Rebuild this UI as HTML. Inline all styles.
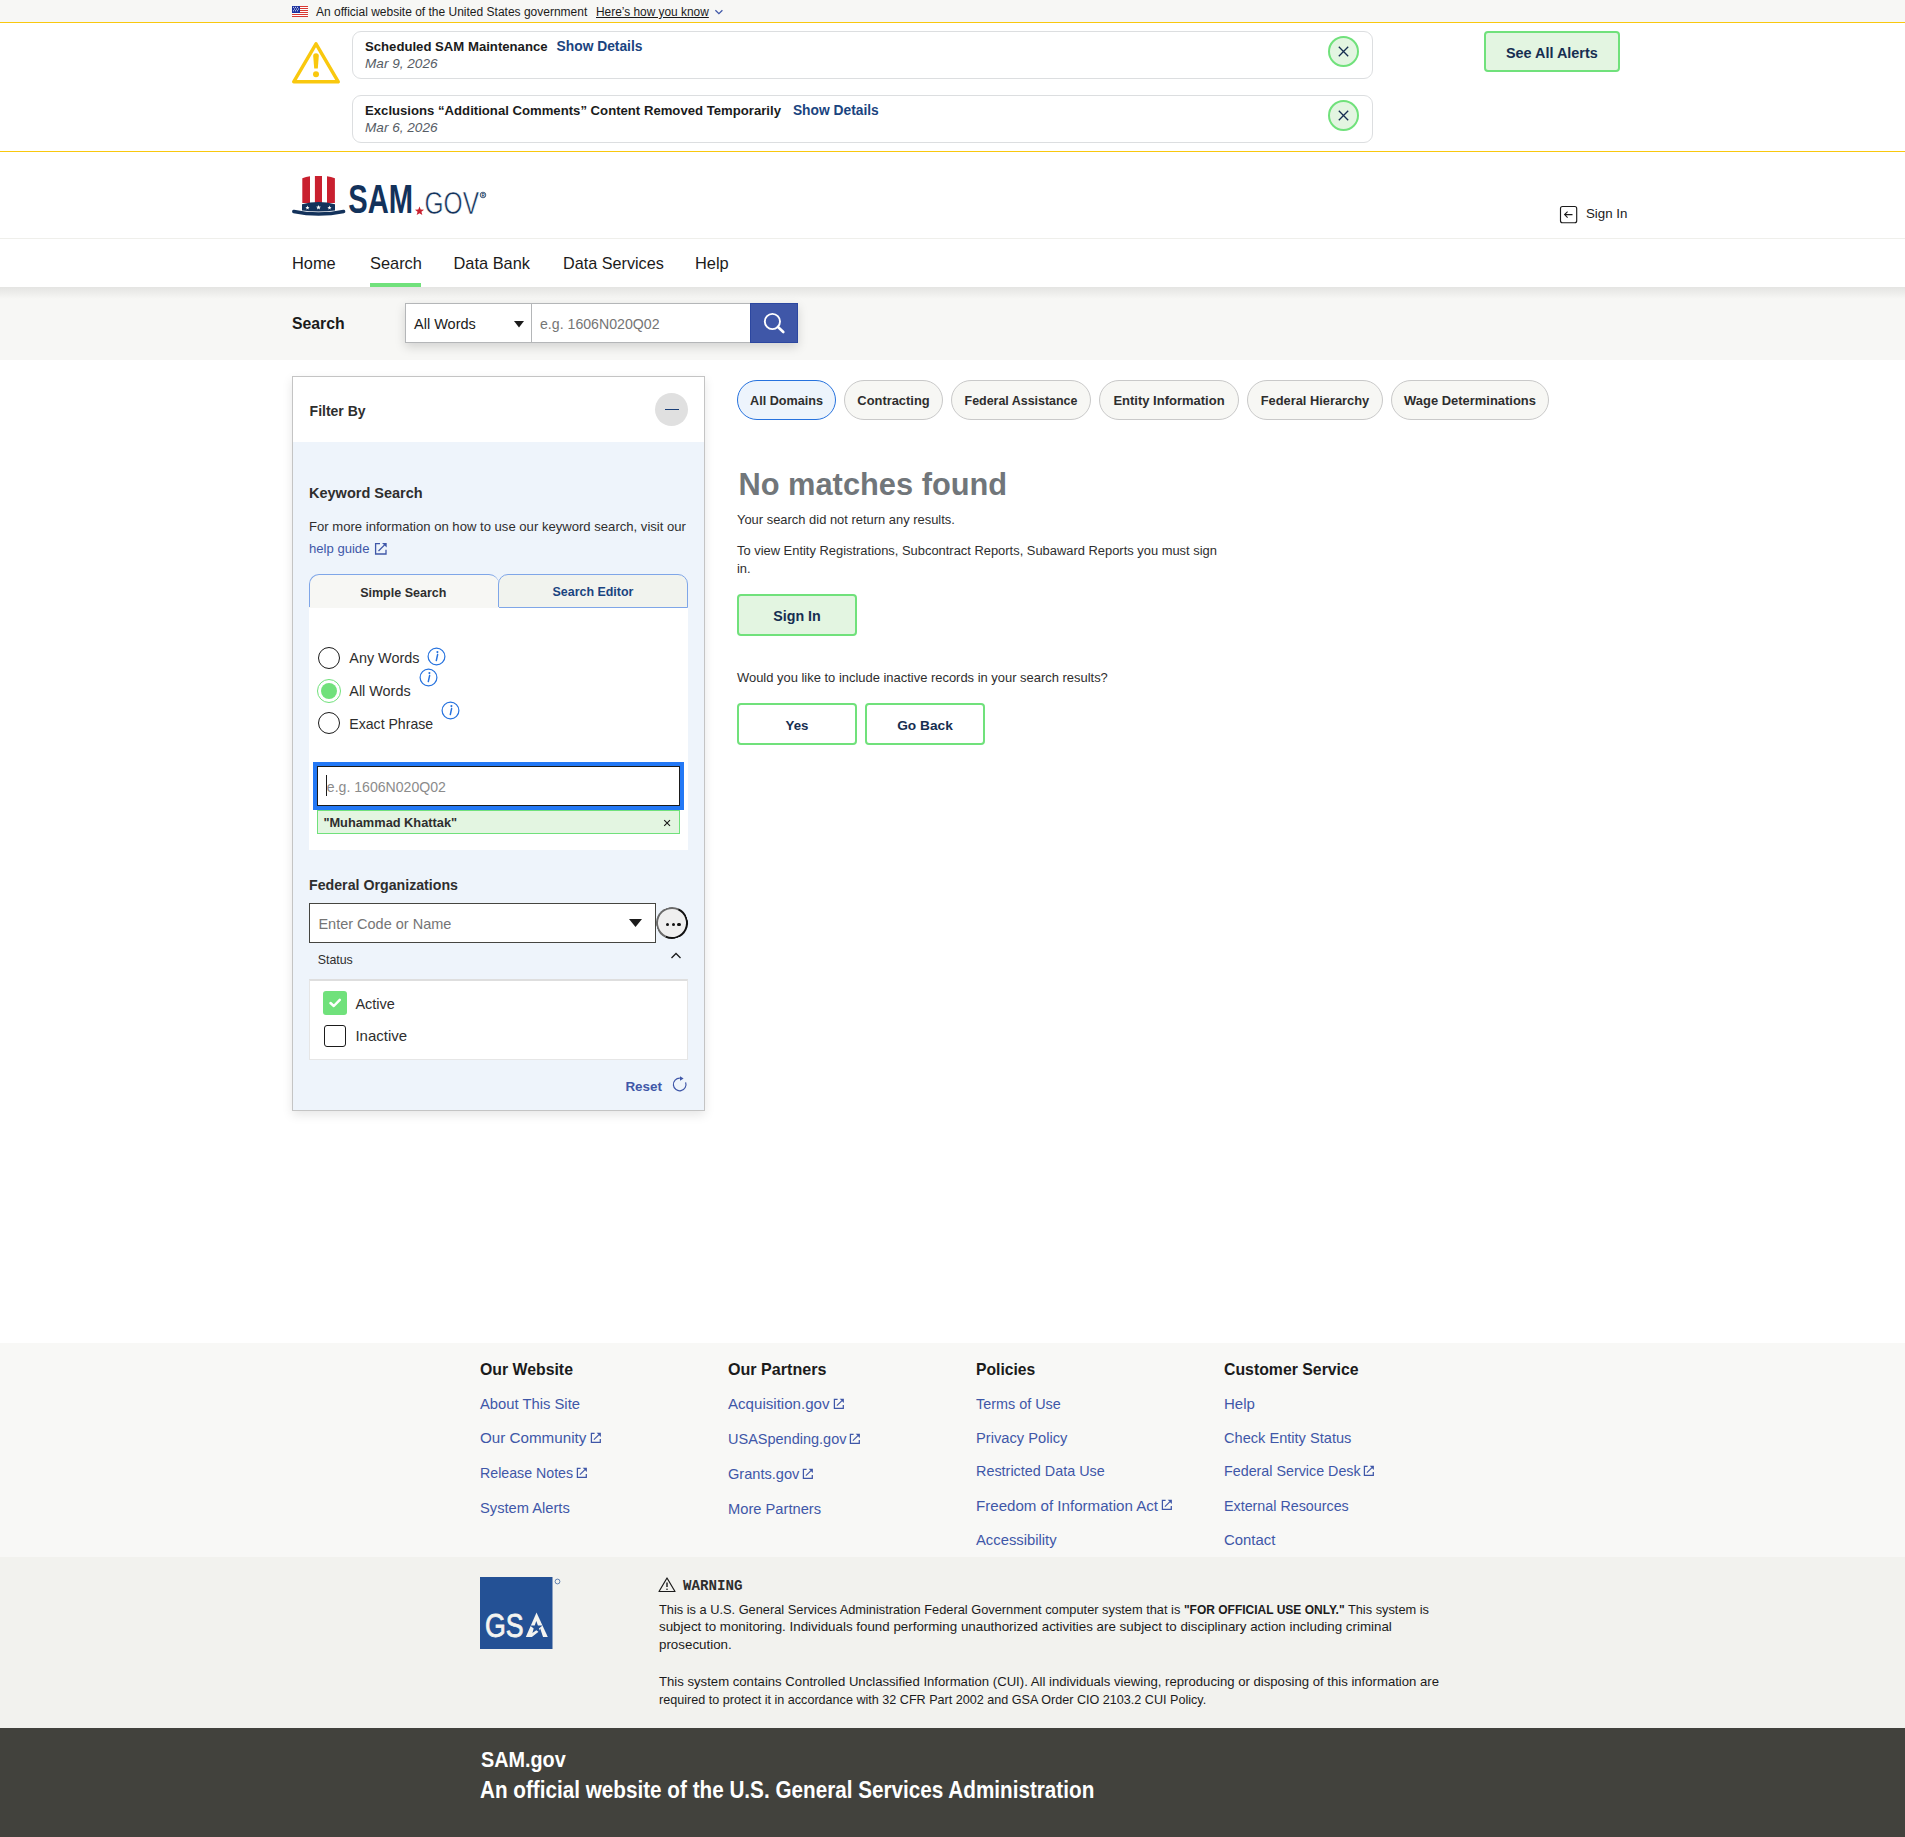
<!DOCTYPE html>
<html lang="en"><head><meta charset="utf-8"><title>SAM.gov | Search</title>
<style>
html,body{margin:0;padding:0;}
body{width:1905px;height:1837px;position:relative;overflow:hidden;background:#fff;font-family:"Liberation Sans", sans-serif;}
.t{position:absolute;white-space:nowrap;font-family:"Liberation Sans", sans-serif;}
.r{position:absolute;display:block;}
</style></head><body>
<div class="r" style="left:0px;top:0px;width:1905px;height:22px;background:#f7f7f5"></div>
<div class="r" style="left:0px;top:22px;width:1905px;height:1px;background:#f9c80e"></div>
<div class="r" style="left:0px;top:151px;width:1905px;height:1px;background:#f9c80e"></div>
<div class="r" style="left:0px;top:238px;width:1905px;height:1px;background:#efefeb"></div>
<div class="r" style="left:0px;top:287px;width:1905px;height:73px;background:#f7f7f5"></div>
<div class="r" style="left:0px;top:287px;width:1905px;height:12px;background:linear-gradient(#e4e4e2,rgba(247,247,245,0))"></div>
<div class="r" style="left:0px;top:1343px;width:1905px;height:214px;background:#f8f8f6"></div>
<div class="r" style="left:0px;top:1557px;width:1905px;height:171px;background:#f2f2ee"></div>
<div class="r" style="left:0px;top:1728px;width:1905px;height:109px;background:#42423d"></div>
<svg class="r" style="left:292px;top:6px;" width="16" height="11" viewBox="0 0 16 11"><rect x="0" y="0" width="16" height="11" fill="#fff"/><rect x="0" y="0" width="16" height="1" fill="#d83933"/><rect x="0" y="2" width="16" height="1" fill="#d83933"/><rect x="0" y="4" width="16" height="1" fill="#d83933"/><rect x="0" y="6" width="16" height="1" fill="#d83933"/><rect x="0" y="8" width="16" height="1" fill="#d83933"/><rect x="0" y="10" width="16" height="1" fill="#d83933"/><rect x="0" y="0" width="8" height="7" fill="#1e33a0"/><circle cx="1.5" cy="1.2" r="0.55" fill="#fff"/><circle cx="3.5" cy="1.2" r="0.55" fill="#fff"/><circle cx="5.5" cy="1.2" r="0.55" fill="#fff"/><circle cx="2.5" cy="3" r="0.55" fill="#fff"/><circle cx="4.5" cy="3" r="0.55" fill="#fff"/><circle cx="6.5" cy="3" r="0.55" fill="#fff"/><circle cx="1.5" cy="4.8" r="0.55" fill="#fff"/><circle cx="3.5" cy="4.8" r="0.55" fill="#fff"/><circle cx="5.5" cy="4.8" r="0.55" fill="#fff"/></svg>
<div class="t" style="left:316px;top:-3px;font-size:12px;line-height:30px;font-weight:400;color:#1b1b1b;font-style:normal;">An official website of the United States government</div>
<div class="t" style="left:596px;top:-3px;font-size:11.9px;line-height:30px;font-weight:400;color:#1b1b1b;font-style:normal;text-decoration:underline;">Here’s how you know</div>
<svg class="r" style="left:713px;top:7px;" width="12" height="10" viewBox="0 0 12 10"><path d="M2.4 3.2 L5.9 6.7 L9.4 3.2" fill="none" stroke="#3f57a8" stroke-width="1.25"/></svg>
<svg class="r" style="left:290px;top:40px;" width="52" height="46" viewBox="0 0 52 46"><path d="M26 3.8 L48.3 41.8 L3.7 41.8 Z" fill="none" stroke="#f9c80e" stroke-width="3.4" stroke-linejoin="round"/><path d="M23.2 16 Q23.2 13.2 26 13.2 Q28.8 13.2 28.8 16 L27.8 28.6 L24.2 28.6 Z" fill="#f9c80e"/><circle cx="26" cy="34.2" r="3" fill="#f9c80e"/></svg>
<div class="r" style="left:352px;top:31px;width:1021px;height:48px;border:1px solid #dcdee0;border-radius:9px;box-sizing:border-box;background:#fff"></div>
<div class="t" style="left:365px;top:32px;font-size:13.15px;line-height:30px;font-weight:700;color:#1b1b1b;font-style:normal;">Scheduled SAM Maintenance</div>
<div class="t" style="left:556.6px;top:32px;font-size:13.8px;line-height:30px;font-weight:700;color:#1a4480;font-style:normal;">Show Details</div>
<div class="t" style="left:365px;top:49px;font-size:13.6px;line-height:30px;font-weight:400;color:#565c65;font-style:italic;">Mar 9, 2026</div>
<div class="r" style="left:1328px;top:36px;width:31px;height:31px;border:2px solid #70e17b;background:#e3f5e1;border-radius:50%;box-sizing:border-box"></div>
<svg class="r" style="left:1328px;top:36px;" width="31" height="31" viewBox="0 0 31 31"><path d="M10.8 10.8 L20.2 20.2 M20.2 10.8 L10.8 20.2" stroke="#162e51" stroke-width="1.3"/></svg>
<div class="r" style="left:352px;top:95px;width:1021px;height:48px;border:1px solid #dcdee0;border-radius:9px;box-sizing:border-box;background:#fff"></div>
<div class="t" style="left:365px;top:96px;font-size:13.15px;line-height:30px;font-weight:700;color:#1b1b1b;font-style:normal;">Exclusions “Additional Comments” Content Removed Temporarily</div>
<div class="t" style="left:792.9px;top:96px;font-size:13.8px;line-height:30px;font-weight:700;color:#1a4480;font-style:normal;">Show Details</div>
<div class="t" style="left:365px;top:113px;font-size:13.6px;line-height:30px;font-weight:400;color:#565c65;font-style:italic;">Mar 6, 2026</div>
<div class="r" style="left:1328px;top:100px;width:31px;height:31px;border:2px solid #70e17b;background:#e3f5e1;border-radius:50%;box-sizing:border-box"></div>
<svg class="r" style="left:1328px;top:100px;" width="31" height="31" viewBox="0 0 31 31"><path d="M10.8 10.8 L20.2 20.2 M20.2 10.8 L10.8 20.2" stroke="#162e51" stroke-width="1.3"/></svg>
<div class="r" style="left:1484px;top:31px;width:136px;height:41px;border:2px solid #70e17b;background:#e3f5e1;border-radius:4px;box-sizing:border-box"></div>
<div class="t" style="left:1506px;top:38px;font-size:14.4px;line-height:30px;font-weight:700;color:#162e51;font-style:normal;">See All Alerts</div>
<svg class="r" style="left:285px;top:170px;" width="210" height="55" viewBox="0 0 210 55">
<path d="M17.3 8.2 Q21 6.6 25 6.2 L25 33 L17.3 33 Z" fill="#c9202f"/>
<path d="M29.9 6 L37 6 L37 33 L29.9 33 Z" fill="#c9202f"/>
<path d="M42 6.2 Q46 6.6 49.9 8.2 L49.9 33 L42 33 Z" fill="#c9202f"/>
<path d="M17 40.6 L17 34.2 Q33.5 29.6 50 34.2 L50 40.6 Q33.5 42.4 17 40.6 Z" fill="#13325b"/>
<path d="M8.8 41.5 Q33.5 46.6 58.6 41.5" fill="none" stroke="#13325b" stroke-width="3.5" stroke-linecap="round"/>
<polygon points="22.50,35.60 23.04,37.05 24.59,37.12 23.38,38.09 23.79,39.58 22.50,38.72 21.21,39.58 21.62,38.09 20.41,37.12 21.96,37.05" fill="#fff"/><polygon points="33.50,34.90 34.14,36.62 35.97,36.70 34.54,37.84 35.03,39.60 33.50,38.59 31.97,39.60 32.46,37.84 31.03,36.70 32.86,36.62" fill="#fff"/><polygon points="44.50,35.60 45.04,37.05 46.59,37.12 45.38,38.09 45.79,39.58 44.50,38.72 43.21,39.58 43.62,38.09 42.41,37.12 43.96,37.05" fill="#fff"/><text x="63.2" y="42.6" font-family="Liberation Sans" font-weight="700" font-size="39.8" fill="#13325b" textLength="64.8" lengthAdjust="spacingAndGlyphs">SAM</text><polygon points="134.50,36.40 135.68,39.57 139.07,39.72 136.42,41.82 137.32,45.08 134.50,43.22 131.68,45.08 132.58,41.82 129.93,39.72 133.32,39.57" fill="#c9202f"/><text x="139.5" y="43.5" font-family="Liberation Sans" font-weight="400" font-size="31.5" fill="#13325b" stroke="#fff" stroke-width="0.6" paint-order="normal" textLength="54.5" lengthAdjust="spacingAndGlyphs">GOV</text><circle cx="198" cy="25" r="2.8" fill="none" stroke="#13325b" stroke-width="0.8"/><text x="196.4" y="26.8" font-family="Liberation Sans" font-size="4.5" font-weight="700" fill="#13325b">R</text></svg>
<svg class="r" style="left:1558px;top:204px;" width="22" height="22" viewBox="0 0 22 22"><rect x="2.5" y="2.5" width="16.2" height="16.2" rx="2" fill="none" stroke="#1b1b1b" stroke-width="1.15"/><path d="M14.5 10.6 L6.6 10.6 M9.6 7.6 L6.6 10.6 L9.6 13.6" fill="none" stroke="#1b1b1b" stroke-width="1.1"/></svg>
<div class="t" style="left:1586px;top:199px;font-size:13.3px;line-height:30px;font-weight:400;color:#1b1b1b;font-style:normal;">Sign In</div>
<div class="t" style="left:292px;top:248px;font-size:16.4px;line-height:30px;font-weight:400;color:#1b1b1b;font-style:normal;">Home</div>
<div class="t" style="left:370px;top:248px;font-size:16.4px;line-height:30px;font-weight:400;color:#1b1b1b;font-style:normal;">Search</div>
<div class="t" style="left:453.5px;top:248px;font-size:16.4px;line-height:30px;font-weight:400;color:#1b1b1b;font-style:normal;">Data Bank</div>
<div class="t" style="left:563px;top:248px;font-size:16.2px;line-height:30px;font-weight:400;color:#1b1b1b;font-style:normal;">Data Services</div>
<div class="t" style="left:695px;top:248px;font-size:16.4px;line-height:30px;font-weight:400;color:#1b1b1b;font-style:normal;">Help</div>
<div class="r" style="left:370px;top:283px;width:51px;height:4px;background:#70e17b"></div>
<div class="t" style="left:292px;top:309px;font-size:15.8px;line-height:30px;font-weight:700;color:#1b1b1b;font-style:normal;">Search</div>
<div class="r" style="left:405px;top:303px;width:393px;height:40px;box-shadow:0 4px 10px rgba(0,0,0,0.15)"></div>
<div class="r" style="left:405px;top:303px;width:127px;height:40px;border:1px solid #b4b6b8;background:#fff;box-sizing:border-box"></div>
<div class="t" style="left:414px;top:309px;font-size:14.5px;line-height:30px;font-weight:400;color:#1b1b1b;font-style:normal;">All Words</div>
<svg class="r" style="left:512px;top:319px;" width="14" height="10" viewBox="0 0 14 10"><path d="M2 2 L12 2 L7 8.5 Z" fill="#1b1b1b"/></svg>
<div class="r" style="left:531px;top:303px;width:220px;height:40px;border:1px solid #b4b6b8;background:#fff;box-sizing:border-box"></div>
<div class="t" style="left:540px;top:309px;font-size:14.15px;line-height:30px;font-weight:400;color:#757575;font-style:normal;">e.g. 1606N020Q02</div>
<div class="r" style="left:750px;top:303px;width:48px;height:40px;background:#3f57a8;border:1px solid #2c47a0;box-sizing:border-box"></div>
<svg class="r" style="left:750px;top:303px;" width="48" height="40" viewBox="0 0 48 40"><circle cx="22.4" cy="18.5" r="7.6" fill="none" stroke="#fff" stroke-width="1.9"/><path d="M28 24 L33.3 29" stroke="#fff" stroke-width="2.6" stroke-linecap="round"/></svg>
<div class="r" style="left:292px;top:376px;width:413px;height:735px;border:1px solid #c4c4c4;background:#eef4fb;box-sizing:border-box;box-shadow:0 4px 10px rgba(0,0,0,0.1)"></div>
<div class="r" style="left:293px;top:377px;width:411px;height:65px;background:#fff"></div>
<div class="t" style="left:309.6px;top:396px;font-size:14px;line-height:30px;font-weight:700;color:#2e2e2e;font-style:normal;">Filter By</div>
<div class="r" style="left:655px;top:393px;width:33px;height:33px;background:#e0e0e0;border-radius:50%"></div>
<div class="r" style="left:665px;top:409px;width:13.5px;height:1.2px;background:#1a3f78"></div>
<div class="t" style="left:309px;top:478px;font-size:14.5px;line-height:30px;font-weight:700;color:#2e2e2e;font-style:normal;">Keyword Search</div>
<div class="t" style="left:309px;top:512px;font-size:13.1px;line-height:30px;font-weight:400;color:#2e2e2e;font-style:normal;">For more information on how to use our keyword search, visit our</div>
<div class="t" style="left:309px;top:534px;font-size:13.1px;line-height:30px;font-weight:400;color:#3f57a8;font-style:normal;">help guide</div>
<svg class="r" style="left:373px;top:541px;" width="16" height="15" viewBox="0 0 16 15"><path d="M7 2.6 L2.6 2.6 L2.6 13 L13 13 L13 8.8" fill="none" stroke="#3f57a8" stroke-width="1.3"/><path d="M5.5 10 L11.6 3.9" fill="none" stroke="#3f57a8" stroke-width="1.3"/><polygon points="13.7,1.9 13.7,6.6 9.0,1.9" fill="#3f57a8"/></svg>
<div class="r" style="left:309px;top:607px;width:379px;height:243px;background:#fff"></div>
<div class="r" style="left:309px;top:574px;width:190px;height:34px;background:#f7f7f4;border:1px solid #7fa6e8;border-bottom:none;border-right:none;border-radius:10px 10px 0 0;box-sizing:border-box"></div>
<div class="r" style="left:498px;top:574px;width:190px;height:34px;background:#f1f3ee;border:1px solid #7fa6e8;border-radius:10px 10px 0 0;box-sizing:border-box"></div>
<div class="r" style="left:309px;top:607px;width:190px;height:1px;background:#f7f7f4"></div>
<div class="t" style="left:360.2px;top:578px;font-size:12.5px;line-height:30px;font-weight:700;color:#2e2e2e;font-style:normal;">Simple Search</div>
<div class="t" style="left:552.5px;top:577px;font-size:12.45px;line-height:30px;font-weight:700;color:#1a4480;font-style:normal;">Search Editor</div>
<div class="r" style="left:318px;top:647px;width:22px;height:22px;border:1.6px solid #1b1b1b;border-radius:50%;box-sizing:border-box;background:#fff"></div>
<div class="t" style="left:349.3px;top:643px;font-size:14.4px;line-height:30px;font-weight:400;color:#2e2e2e;font-style:normal;">Any Words</div>
<svg class="r" style="left:427px;top:647px;" width="19" height="19" viewBox="0 0 19 19"><circle cx="9.5" cy="9.5" r="8.4" fill="none" stroke="#2672de" stroke-width="1.2"/><circle cx="10.4" cy="5.1" r="1.05" fill="#2672de"/><path d="M10.6 7.6 L9.3 13.6" stroke="#2672de" stroke-width="1.5" stroke-linecap="round"/></svg>
<div class="r" style="left:317px;top:679px;width:24px;height:24px;border:1.8px solid #70e17b;border-radius:50%;box-sizing:border-box;background:#fff"></div>
<div class="r" style="left:321px;top:683px;width:16px;height:16px;background:#70e17b;border-radius:50%"></div>
<div class="t" style="left:349.3px;top:676px;font-size:14.4px;line-height:30px;font-weight:400;color:#2e2e2e;font-style:normal;">All Words</div>
<svg class="r" style="left:418.7px;top:668px;" width="19" height="19" viewBox="0 0 19 19"><circle cx="9.5" cy="9.5" r="8.4" fill="none" stroke="#2672de" stroke-width="1.2"/><circle cx="10.4" cy="5.1" r="1.05" fill="#2672de"/><path d="M10.6 7.6 L9.3 13.6" stroke="#2672de" stroke-width="1.5" stroke-linecap="round"/></svg>
<div class="r" style="left:318px;top:712px;width:22px;height:22px;border:1.6px solid #1b1b1b;border-radius:50%;box-sizing:border-box;background:#fff"></div>
<div class="t" style="left:349.3px;top:709px;font-size:14.1px;line-height:30px;font-weight:400;color:#2e2e2e;font-style:normal;">Exact Phrase</div>
<svg class="r" style="left:440.6px;top:701px;" width="19" height="19" viewBox="0 0 19 19"><circle cx="9.5" cy="9.5" r="8.4" fill="none" stroke="#2672de" stroke-width="1.2"/><circle cx="10.4" cy="5.1" r="1.05" fill="#2672de"/><path d="M10.6 7.6 L9.3 13.6" stroke="#2672de" stroke-width="1.5" stroke-linecap="round"/></svg>
<div class="r" style="left:313px;top:762px;width:371px;height:48px;background:#2378f5"></div>
<div class="r" style="left:317px;top:766px;width:363px;height:40px;background:#fff;border:1px solid #1b1b1b;box-sizing:border-box"></div>
<div class="r" style="left:326px;top:775px;width:1px;height:21px;background:#1b1b1b"></div>
<div class="t" style="left:326.8px;top:772px;font-size:14.1px;line-height:30px;font-weight:400;color:#8b8b8b;font-style:normal;">e.g. 1606N020Q02</div>
<div class="r" style="left:317px;top:810px;width:363px;height:24px;background:#e3f5e1;border:1px solid #70e17b;box-sizing:border-box"></div>
<div class="t" style="left:323.4px;top:808px;font-size:12.8px;line-height:30px;font-weight:700;color:#2e2e2e;font-style:normal;">"Muhammad Khattak"</div>
<svg class="r" style="left:660px;top:815px;" width="14" height="14" viewBox="0 0 14 14"><path d="M4.2 5.1 L10 10.9 M10 5.1 L4.2 10.9" stroke="#1b1b1b" stroke-width="1.15"/></svg>
<div class="t" style="left:309px;top:870px;font-size:14.2px;line-height:30px;font-weight:700;color:#2e2e2e;font-style:normal;">Federal Organizations</div>
<div class="r" style="left:309px;top:903px;width:347px;height:40px;background:#fff;border:1px solid #454540;box-sizing:border-box"></div>
<div class="t" style="left:318.4px;top:909px;font-size:14.5px;line-height:30px;font-weight:400;color:#757575;font-style:normal;">Enter Code or Name</div>
<svg class="r" style="left:627px;top:916px;" width="18" height="14" viewBox="0 0 18 14"><path d="M2 3 L15 3 L8.5 11 Z" fill="#1b1b1b"/></svg>
<div class="r" style="left:656px;top:907px;width:32px;height:32px;background:#efefef;border:2.2px solid #111;border-color:#6a6a6a #111 #111 #6a6a6a;border-radius:50%;box-sizing:border-box;transform:rotate(-20deg)"></div>
<div class="r" style="left:665.85px;top:922.5px;width:3.3px;height:3.3px;background:#111;border-radius:50%"></div>
<div class="r" style="left:671.5500000000001px;top:922.5px;width:3.3px;height:3.3px;background:#111;border-radius:50%"></div>
<div class="r" style="left:677.35px;top:922.5px;width:3.3px;height:3.3px;background:#111;border-radius:50%"></div>
<div class="t" style="left:317.7px;top:945px;font-size:12.4px;line-height:30px;font-weight:400;color:#2e2e2e;font-style:normal;">Status</div>
<svg class="r" style="left:668px;top:948px;" width="16" height="14" viewBox="0 0 16 14"><path d="M3.5 10 L8 5.5 L12.5 10" fill="none" stroke="#1b1b1b" stroke-width="1.3"/></svg>
<div class="r" style="left:309px;top:979px;width:379px;height:81px;background:#fff;border:1px solid #e6e6e6;border-top:2px solid #dedede;box-sizing:border-box"></div>
<div class="r" style="left:323px;top:991px;width:24px;height:24px;background:#70e17b;border-radius:3px"></div>
<svg class="r" style="left:323px;top:991px;" width="24" height="24" viewBox="0 0 24 24"><path d="M7.5 12 L10.8 15 L16.8 8.8" fill="none" stroke="#fff" stroke-width="2.5" stroke-linecap="round" stroke-linejoin="round"/></svg>
<div class="t" style="left:355.4px;top:989px;font-size:14.5px;line-height:30px;font-weight:400;color:#2e2e2e;font-style:normal;">Active</div>
<div class="r" style="left:324px;top:1025px;width:22px;height:22px;border:1.6px solid #1b1b1b;border-radius:3px;box-sizing:border-box;background:#fff"></div>
<div class="t" style="left:355.4px;top:1021px;font-size:15px;line-height:30px;font-weight:400;color:#2e2e2e;font-style:normal;">Inactive</div>
<div class="t" style="left:625.4px;top:1072px;font-size:13.45px;line-height:30px;font-weight:700;color:#3f57a8;font-style:normal;">Reset</div>
<svg class="r" style="left:670px;top:1075px;" width="18" height="18" viewBox="0 0 18 18"><path d="M15.62 7.35 A6.3 6.3 0 1 1 9.9 3.2" fill="none" stroke="#3f57a8" stroke-width="1.2"/><path d="M10 1.2 L13.6 3.4 L10 5.8 Z" fill="#3f57a8"/></svg>
<div class="r" style="left:737px;top:380px;width:99px;height:40px;border:1.3px solid #2672de;background:#edf4fc;border-radius:20px;box-sizing:border-box"></div>
<div class="t" style="left:737px;top:386px;width:99px;text-align:center;font-size:12.63px;line-height:30px;font-weight:700;color:#2e2e2e;font-style:normal;">All Domains</div>
<div class="r" style="left:844px;top:380px;width:99px;height:40px;border:1px solid #c9c9c9;background:#f7f7f4;border-radius:20px;box-sizing:border-box"></div>
<div class="t" style="left:844px;top:386px;width:99px;text-align:center;font-size:12.9px;line-height:30px;font-weight:700;color:#2e2e2e;font-style:normal;">Contracting</div>
<div class="r" style="left:951px;top:380px;width:140px;height:40px;border:1px solid #c9c9c9;background:#f7f7f4;border-radius:20px;box-sizing:border-box"></div>
<div class="t" style="left:951px;top:386px;width:140px;text-align:center;font-size:12.45px;line-height:30px;font-weight:700;color:#2e2e2e;font-style:normal;">Federal Assistance</div>
<div class="r" style="left:1099px;top:380px;width:140px;height:40px;border:1px solid #c9c9c9;background:#f7f7f4;border-radius:20px;box-sizing:border-box"></div>
<div class="t" style="left:1099px;top:386px;width:140px;text-align:center;font-size:13.0px;line-height:30px;font-weight:700;color:#2e2e2e;font-style:normal;">Entity Information</div>
<div class="r" style="left:1247px;top:380px;width:136px;height:40px;border:1px solid #c9c9c9;background:#f7f7f4;border-radius:20px;box-sizing:border-box"></div>
<div class="t" style="left:1247px;top:386px;width:136px;text-align:center;font-size:12.85px;line-height:30px;font-weight:700;color:#2e2e2e;font-style:normal;">Federal Hierarchy</div>
<div class="r" style="left:1391px;top:380px;width:158px;height:40px;border:1px solid #c9c9c9;background:#f7f7f4;border-radius:20px;box-sizing:border-box"></div>
<div class="t" style="left:1391px;top:386px;width:158px;text-align:center;font-size:12.95px;line-height:30px;font-weight:700;color:#2e2e2e;font-style:normal;">Wage Determinations</div>
<div class="t" style="left:738.5px;top:470px;font-size:30.8px;line-height:30px;font-weight:700;color:#71767a;font-style:normal;">No matches found</div>
<div class="t" style="left:737px;top:505px;font-size:12.93px;line-height:30px;font-weight:400;color:#2e2e2e;font-style:normal;">Your search did not return any results.</div>
<div class="t" style="left:737px;top:536px;font-size:12.91px;line-height:30px;font-weight:400;color:#2e2e2e;font-style:normal;">To view Entity Registrations, Subcontract Reports, Subaward Reports you must sign</div>
<div class="t" style="left:737px;top:554px;font-size:12.91px;line-height:30px;font-weight:400;color:#2e2e2e;font-style:normal;">in.</div>
<div class="r" style="left:737px;top:594px;width:120px;height:42px;border:2px solid #70e17b;background:#e3f5e1;border-radius:4px;box-sizing:border-box"></div>
<div class="t" style="left:737px;top:601px;width:120px;text-align:center;font-size:14.25px;line-height:30px;font-weight:700;color:#162e51;font-style:normal;">Sign In</div>
<div class="t" style="left:737px;top:663px;font-size:12.94px;line-height:30px;font-weight:400;color:#2e2e2e;font-style:normal;">Would you like to include inactive records in your search results?</div>
<div class="r" style="left:737px;top:703px;width:120px;height:42px;border:2px solid #70e17b;background:#fff;border-radius:4px;box-sizing:border-box"></div>
<div class="t" style="left:737px;top:711px;width:120px;text-align:center;font-size:13.3px;line-height:30px;font-weight:700;color:#162e51;font-style:normal;">Yes</div>
<div class="r" style="left:865px;top:703px;width:120px;height:42px;border:2px solid #70e17b;background:#fff;border-radius:4px;box-sizing:border-box"></div>
<div class="t" style="left:865px;top:711px;width:120px;text-align:center;font-size:13.7px;line-height:30px;font-weight:700;color:#162e51;font-style:normal;">Go Back</div>
<div class="t" style="left:480px;top:1355px;font-size:15.84px;line-height:30px;font-weight:700;color:#1b1b1b;font-style:normal;">Our Website</div>
<div class="t" style="left:480px;top:1389px;font-size:14.79px;line-height:30px;font-weight:400;color:#3f57a8;font-style:normal;">About This Site</div>
<div class="t" style="left:480px;top:1423px;font-size:15.2px;line-height:30px;font-weight:400;color:#3f57a8;font-style:normal;">Our Community</div>
<div class="t" style="left:480px;top:1458px;font-size:14.2px;line-height:30px;font-weight:400;color:#3f57a8;font-style:normal;">Release Notes</div>
<div class="t" style="left:480px;top:1493px;font-size:14.7px;line-height:30px;font-weight:400;color:#3f57a8;font-style:normal;">System Alerts</div>
<div class="t" style="left:728px;top:1354px;font-size:16.1px;line-height:30px;font-weight:700;color:#1b1b1b;font-style:normal;">Our Partners</div>
<div class="t" style="left:728px;top:1389px;font-size:15.1px;line-height:30px;font-weight:400;color:#3f57a8;font-style:normal;">Acquisition.gov</div>
<div class="t" style="left:728px;top:1424px;font-size:14.5px;line-height:30px;font-weight:400;color:#3f57a8;font-style:normal;">USASpending.gov</div>
<div class="t" style="left:728px;top:1459px;font-size:14.6px;line-height:30px;font-weight:400;color:#3f57a8;font-style:normal;">Grants.gov</div>
<div class="t" style="left:728px;top:1494px;font-size:14.7px;line-height:30px;font-weight:400;color:#3f57a8;font-style:normal;">More Partners</div>
<div class="t" style="left:976px;top:1355px;font-size:15.7px;line-height:30px;font-weight:700;color:#1b1b1b;font-style:normal;">Policies</div>
<div class="t" style="left:976px;top:1389px;font-size:14.4px;line-height:30px;font-weight:400;color:#3f57a8;font-style:normal;">Terms of Use</div>
<div class="t" style="left:976px;top:1423px;font-size:14.7px;line-height:30px;font-weight:400;color:#3f57a8;font-style:normal;">Privacy Policy</div>
<div class="t" style="left:976px;top:1456px;font-size:14.4px;line-height:30px;font-weight:400;color:#3f57a8;font-style:normal;">Restricted Data Use</div>
<div class="t" style="left:976px;top:1491px;font-size:15.1px;line-height:30px;font-weight:400;color:#3f57a8;font-style:normal;">Freedom of Information Act</div>
<div class="t" style="left:976px;top:1525px;font-size:14.8px;line-height:30px;font-weight:400;color:#3f57a8;font-style:normal;">Accessibility</div>
<div class="t" style="left:1224px;top:1355px;font-size:15.84px;line-height:30px;font-weight:700;color:#1b1b1b;font-style:normal;">Customer Service</div>
<div class="t" style="left:1224px;top:1389px;font-size:15px;line-height:30px;font-weight:400;color:#3f57a8;font-style:normal;">Help</div>
<div class="t" style="left:1224px;top:1423px;font-size:14.6px;line-height:30px;font-weight:400;color:#3f57a8;font-style:normal;">Check Entity Status</div>
<div class="t" style="left:1224px;top:1456px;font-size:14.3px;line-height:30px;font-weight:400;color:#3f57a8;font-style:normal;">Federal Service Desk</div>
<div class="t" style="left:1224px;top:1491px;font-size:14.3px;line-height:30px;font-weight:400;color:#3f57a8;font-style:normal;">External Resources</div>
<div class="t" style="left:1224px;top:1525px;font-size:14.9px;line-height:30px;font-weight:400;color:#3f57a8;font-style:normal;">Contact</div>
<svg class="r" style="left:590px;top:1432px;" width="13" height="13" viewBox="0 0 13 13"><path d="M4.6 1.4 L1.4 1.4 L1.4 10.3 L10.3 10.3 L10.3 6.9" fill="none" stroke="#3f57a8" stroke-width="1.25"/><path d="M3.9 7.7 L9.0 2.6" fill="none" stroke="#3f57a8" stroke-width="1.2"/><polygon points="10.9,0.8 10.9,5.0 6.7,0.8" fill="#3f57a8"/></svg>
<svg class="r" style="left:576px;top:1467px;" width="13" height="13" viewBox="0 0 13 13"><path d="M4.6 1.4 L1.4 1.4 L1.4 10.3 L10.3 10.3 L10.3 6.9" fill="none" stroke="#3f57a8" stroke-width="1.25"/><path d="M3.9 7.7 L9.0 2.6" fill="none" stroke="#3f57a8" stroke-width="1.2"/><polygon points="10.9,0.8 10.9,5.0 6.7,0.8" fill="#3f57a8"/></svg>
<svg class="r" style="left:833px;top:1398px;" width="13" height="13" viewBox="0 0 13 13"><path d="M4.6 1.4 L1.4 1.4 L1.4 10.3 L10.3 10.3 L10.3 6.9" fill="none" stroke="#3f57a8" stroke-width="1.25"/><path d="M3.9 7.7 L9.0 2.6" fill="none" stroke="#3f57a8" stroke-width="1.2"/><polygon points="10.9,0.8 10.9,5.0 6.7,0.8" fill="#3f57a8"/></svg>
<svg class="r" style="left:849px;top:1433px;" width="13" height="13" viewBox="0 0 13 13"><path d="M4.6 1.4 L1.4 1.4 L1.4 10.3 L10.3 10.3 L10.3 6.9" fill="none" stroke="#3f57a8" stroke-width="1.25"/><path d="M3.9 7.7 L9.0 2.6" fill="none" stroke="#3f57a8" stroke-width="1.2"/><polygon points="10.9,0.8 10.9,5.0 6.7,0.8" fill="#3f57a8"/></svg>
<svg class="r" style="left:802px;top:1468px;" width="13" height="13" viewBox="0 0 13 13"><path d="M4.6 1.4 L1.4 1.4 L1.4 10.3 L10.3 10.3 L10.3 6.9" fill="none" stroke="#3f57a8" stroke-width="1.25"/><path d="M3.9 7.7 L9.0 2.6" fill="none" stroke="#3f57a8" stroke-width="1.2"/><polygon points="10.9,0.8 10.9,5.0 6.7,0.8" fill="#3f57a8"/></svg>
<svg class="r" style="left:1161px;top:1499px;" width="13" height="13" viewBox="0 0 13 13"><path d="M4.6 1.4 L1.4 1.4 L1.4 10.3 L10.3 10.3 L10.3 6.9" fill="none" stroke="#3f57a8" stroke-width="1.25"/><path d="M3.9 7.7 L9.0 2.6" fill="none" stroke="#3f57a8" stroke-width="1.2"/><polygon points="10.9,0.8 10.9,5.0 6.7,0.8" fill="#3f57a8"/></svg>
<svg class="r" style="left:1363px;top:1465px;" width="13" height="13" viewBox="0 0 13 13"><path d="M4.6 1.4 L1.4 1.4 L1.4 10.3 L10.3 10.3 L10.3 6.9" fill="none" stroke="#3f57a8" stroke-width="1.25"/><path d="M3.9 7.7 L9.0 2.6" fill="none" stroke="#3f57a8" stroke-width="1.2"/><polygon points="10.9,0.8 10.9,5.0 6.7,0.8" fill="#3f57a8"/></svg>
<svg class="r" style="left:480px;top:1577px;" width="84" height="73" viewBox="0 0 84 73"><rect x="0" y="0" width="72.5" height="72" fill="#245195"/><text x="5" y="60.2" font-family="Liberation Sans" font-size="33.5" fill="#f4f4f0" stroke="#f4f4f0" stroke-width="0.8" textLength="38.6" lengthAdjust="spacingAndGlyphs">GS</text><polygon points="56.5,35.6 45.8,60.1 67.8,60.1" fill="#f4f4f0"/><polygon points="56.3,43.9 57.9,48.4 62.6,48.5 58.9,51.4 60.2,56 56.3,53.3 52.4,56 53.7,51.4 50,48.5 54.7,48.4" fill="#245195"/><polygon points="51.2,60.5 58.6,54.8 60.2,51.5 63.2,60.5" fill="#245195"/><circle cx="77.5" cy="4.5" r="2.4" fill="none" stroke="#245195" stroke-width="0.7"/></svg>
<svg class="r" style="left:657px;top:1576px;" width="20" height="17" viewBox="0 0 20 17"><path d="M10 2 L18 15.5 L2 15.5 Z" fill="none" stroke="#1b1b1b" stroke-width="1.2" stroke-linejoin="round"/><path d="M10 6.5 L10 11" stroke="#1b1b1b" stroke-width="1.4"/><circle cx="10" cy="13.2" r="0.8" fill="#1b1b1b"/></svg>
<div class="t" style="left:683px;top:1571px;font-size:14.2px;line-height:30px;font-weight:700;color:#2e2e2e;font-style:normal;font-family:'Liberation Mono',monospace;">WARNING</div>
<div class="t" style="left:659px;top:1595px;font-size:12.8px;line-height:30px;font-weight:400;color:#1b1b1b;font-style:normal;">This is a U.S. General Services Administration Federal Government computer system that is <b style="font-size:12px">"FOR OFFICIAL USE ONLY."</b> This system is</div>
<div class="t" style="left:659px;top:1612px;font-size:13.35px;line-height:30px;font-weight:400;color:#1b1b1b;font-style:normal;">subject to monitoring. Individuals found performing unauthorized activities are subject to disciplinary action including criminal</div>
<div class="t" style="left:659px;top:1630px;font-size:13.35px;line-height:30px;font-weight:400;color:#1b1b1b;font-style:normal;">prosecution.</div>
<div class="t" style="left:659px;top:1667px;font-size:13.15px;line-height:30px;font-weight:400;color:#1b1b1b;font-style:normal;">This system contains Controlled Unclassified Information (CUI). All individuals viewing, reproducing or disposing of this information are</div>
<div class="t" style="left:659px;top:1685px;font-size:12.6px;line-height:30px;font-weight:400;color:#1b1b1b;font-style:normal;">required to protect it in accordance with 32 CFR Part 2002 and GSA Order CIO 2103.2 CUI Policy.</div>
<div class="t" style="left:480.5px;top:1745px;font-size:22px;line-height:30px;font-weight:700;color:#fff;font-style:normal;transform:scaleX(0.9);transform-origin:0 0;">SAM.gov</div>
<div class="t" style="left:480px;top:1775px;font-size:23.3px;line-height:30px;font-weight:700;color:#fff;font-style:normal;transform:scaleX(0.888);transform-origin:0 0;">An official website of the U.S. General Services Administration</div>
</body></html>
